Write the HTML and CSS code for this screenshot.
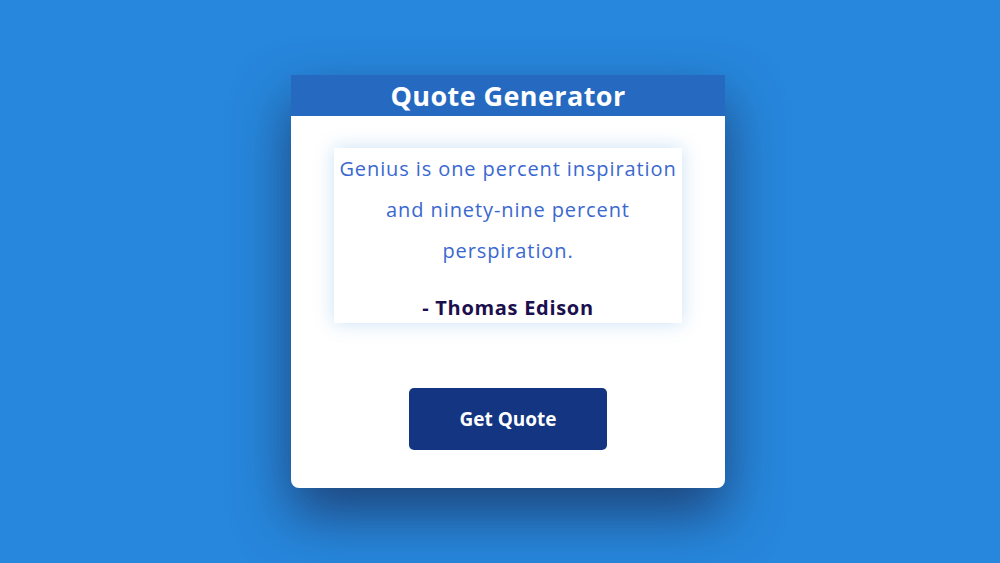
FILE: index.html
```html
<!DOCTYPE html>
<html lang="en">
<head>
<meta charset="utf-8">
<title>Quote Generator</title>
<link rel="stylesheet" href="styles.css">
</head>
<body>
<main class="page">
  <section class="card">
    <h1 class="card-title">Quote Generator</h1>
    <div class="card-body">
      <div class="quote-box">
        <p class="quote-text">Genius is one percent inspiration and ninety-nine percent perspiration.</p>
        <p class="quote-author">- Thomas Edison</p>
      </div>
      <button class="quote-btn" type="button">Get Quote</button>
    </div>
  </section>
</main>
</body>
</html>
```

FILE: styles.css
```css
html, body {
  margin: 0;
  padding: 0;
}
body {
  background: #2787dc;
  font-family: "Open Sans", "Noto Sans", sans-serif;
}
.page {
  height: 563px;
  display: flex;
  align-items: center;
  justify-content: center;
  padding-left: 16px;
  box-sizing: border-box;
}
.card {
  width: 434px;
  height: 413px;
  background: #ffffff;
  border-radius: 0 0 8px 8px;
  box-shadow: 0 26px 55px rgba(25, 40, 80, 0.7);
  display: flex;
  flex-direction: column;
}
.card-title {
  margin: 0;
  height: 41px;
  line-height: 41px;
  background: #2569c0;
  color: #ffffff;
  text-align: center;
  font-size: 27px;
  font-weight: 700;
  letter-spacing: 0.4px;
}
.card-body {
  display: flex;
  flex-direction: column;
  align-items: center;
  padding-top: 32px;
}
.quote-box {
  width: 348px;
  height: 175px;
  box-sizing: border-box;
  padding: 0 4px;
  background: #ffffff;
  box-shadow: 0 0 18px rgba(39, 135, 220, 0.25);
  text-align: center;
}
.quote-text {
  margin: 0;
  color: #3a68cf;
  font-size: 20px;
  line-height: 41px;
  letter-spacing: 0.9px;
}
.quote-author {
  margin: 22px 0 0;
  color: #1b0f4d;
  font-size: 20px;
  font-weight: 700;
  line-height: 30px;
  letter-spacing: 0.7px;
}
.quote-btn {
  margin-top: 65px;
  width: 198px;
  height: 62px;
  border: none;
  border-radius: 5px;
  background: #133582;
  color: #ffffff;
  font-family: inherit;
  font-size: 19px;
  font-weight: 700;
}
```
